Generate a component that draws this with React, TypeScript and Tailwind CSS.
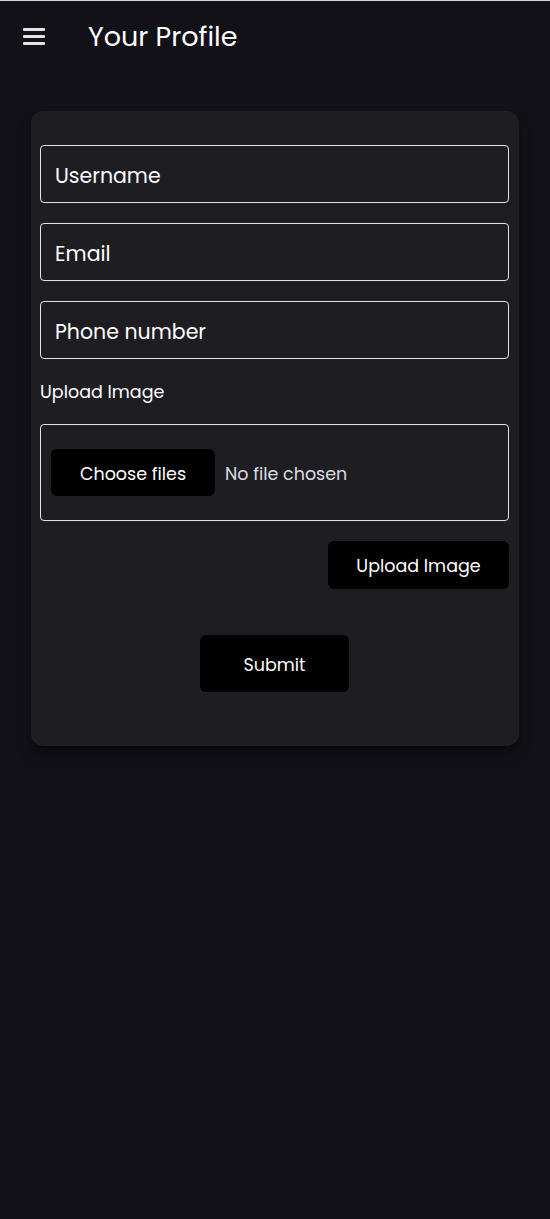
import React from 'react';

const font = { fontFamily: 'Poppins, "Open Sans", "Noto Sans", sans-serif' };

export default function App() {
  return (
    <div className="min-h-[1219px] bg-[#131118] border-t border-[#d4d4d8] text-white" style={font}>
      <header className="flex items-center h-[70px] pl-[23px]">
        <button className="flex flex-col gap-[4px] w-[22px]">
          <span className="block h-[3px] bg-[#e4e4e7] rounded-[1px]" />
          <span className="block h-[3px] bg-[#e4e4e7] rounded-[1px]" />
          <span className="block h-[3px] bg-[#e4e4e7] rounded-[1px]" />
        </button>
        <h1 className="ml-[43px] text-[27px] leading-none">Your Profile</h1>
      </header>

      <div className="px-[31px] pt-[40px]">
        <form className="bg-[#1e1d22] rounded-xl shadow-lg shadow-black/40 px-[9px] pr-[10px] pt-[34px] pb-[54px] text-[17.5px]">
          <div className="flex flex-col gap-[20px]">
            {['Username', 'Email', 'Phone number'].map((p) => (
              <input
                key={p}
                placeholder={p}
                className="h-[58px] w-full rounded-[4px] border border-[#e4e4e7] bg-transparent px-[14px] pt-[2px] text-[20.5px] text-white placeholder:text-white outline-none"
              />
            ))}
          </div>

          <label className="block mt-[21px] leading-6">Upload Image</label>

          <div className="mt-[20px] h-[97px] rounded-[4px] border border-[#e4e4e7] flex items-center px-[10px]">
            <span className="w-[164px] h-[47px] pt-[3px] rounded-md bg-black flex items-center justify-center">
              Choose files
            </span>
            <span className="ml-[10px] pt-[3px] text-[#dcdce0]">No file chosen</span>
          </div>

          <div className="flex justify-end mt-[20px]">
            <button type="button" className="w-[181px] h-[48px] pt-[2px] rounded-md bg-black">
              Upload Image
            </button>
          </div>

          <div className="flex justify-center mt-[46px]">
            <button type="submit" className="w-[149px] h-[57px] pt-[3px] rounded-md bg-black">
              Submit
            </button>
          </div>
        </form>
      </div>
    </div>
  );
}
